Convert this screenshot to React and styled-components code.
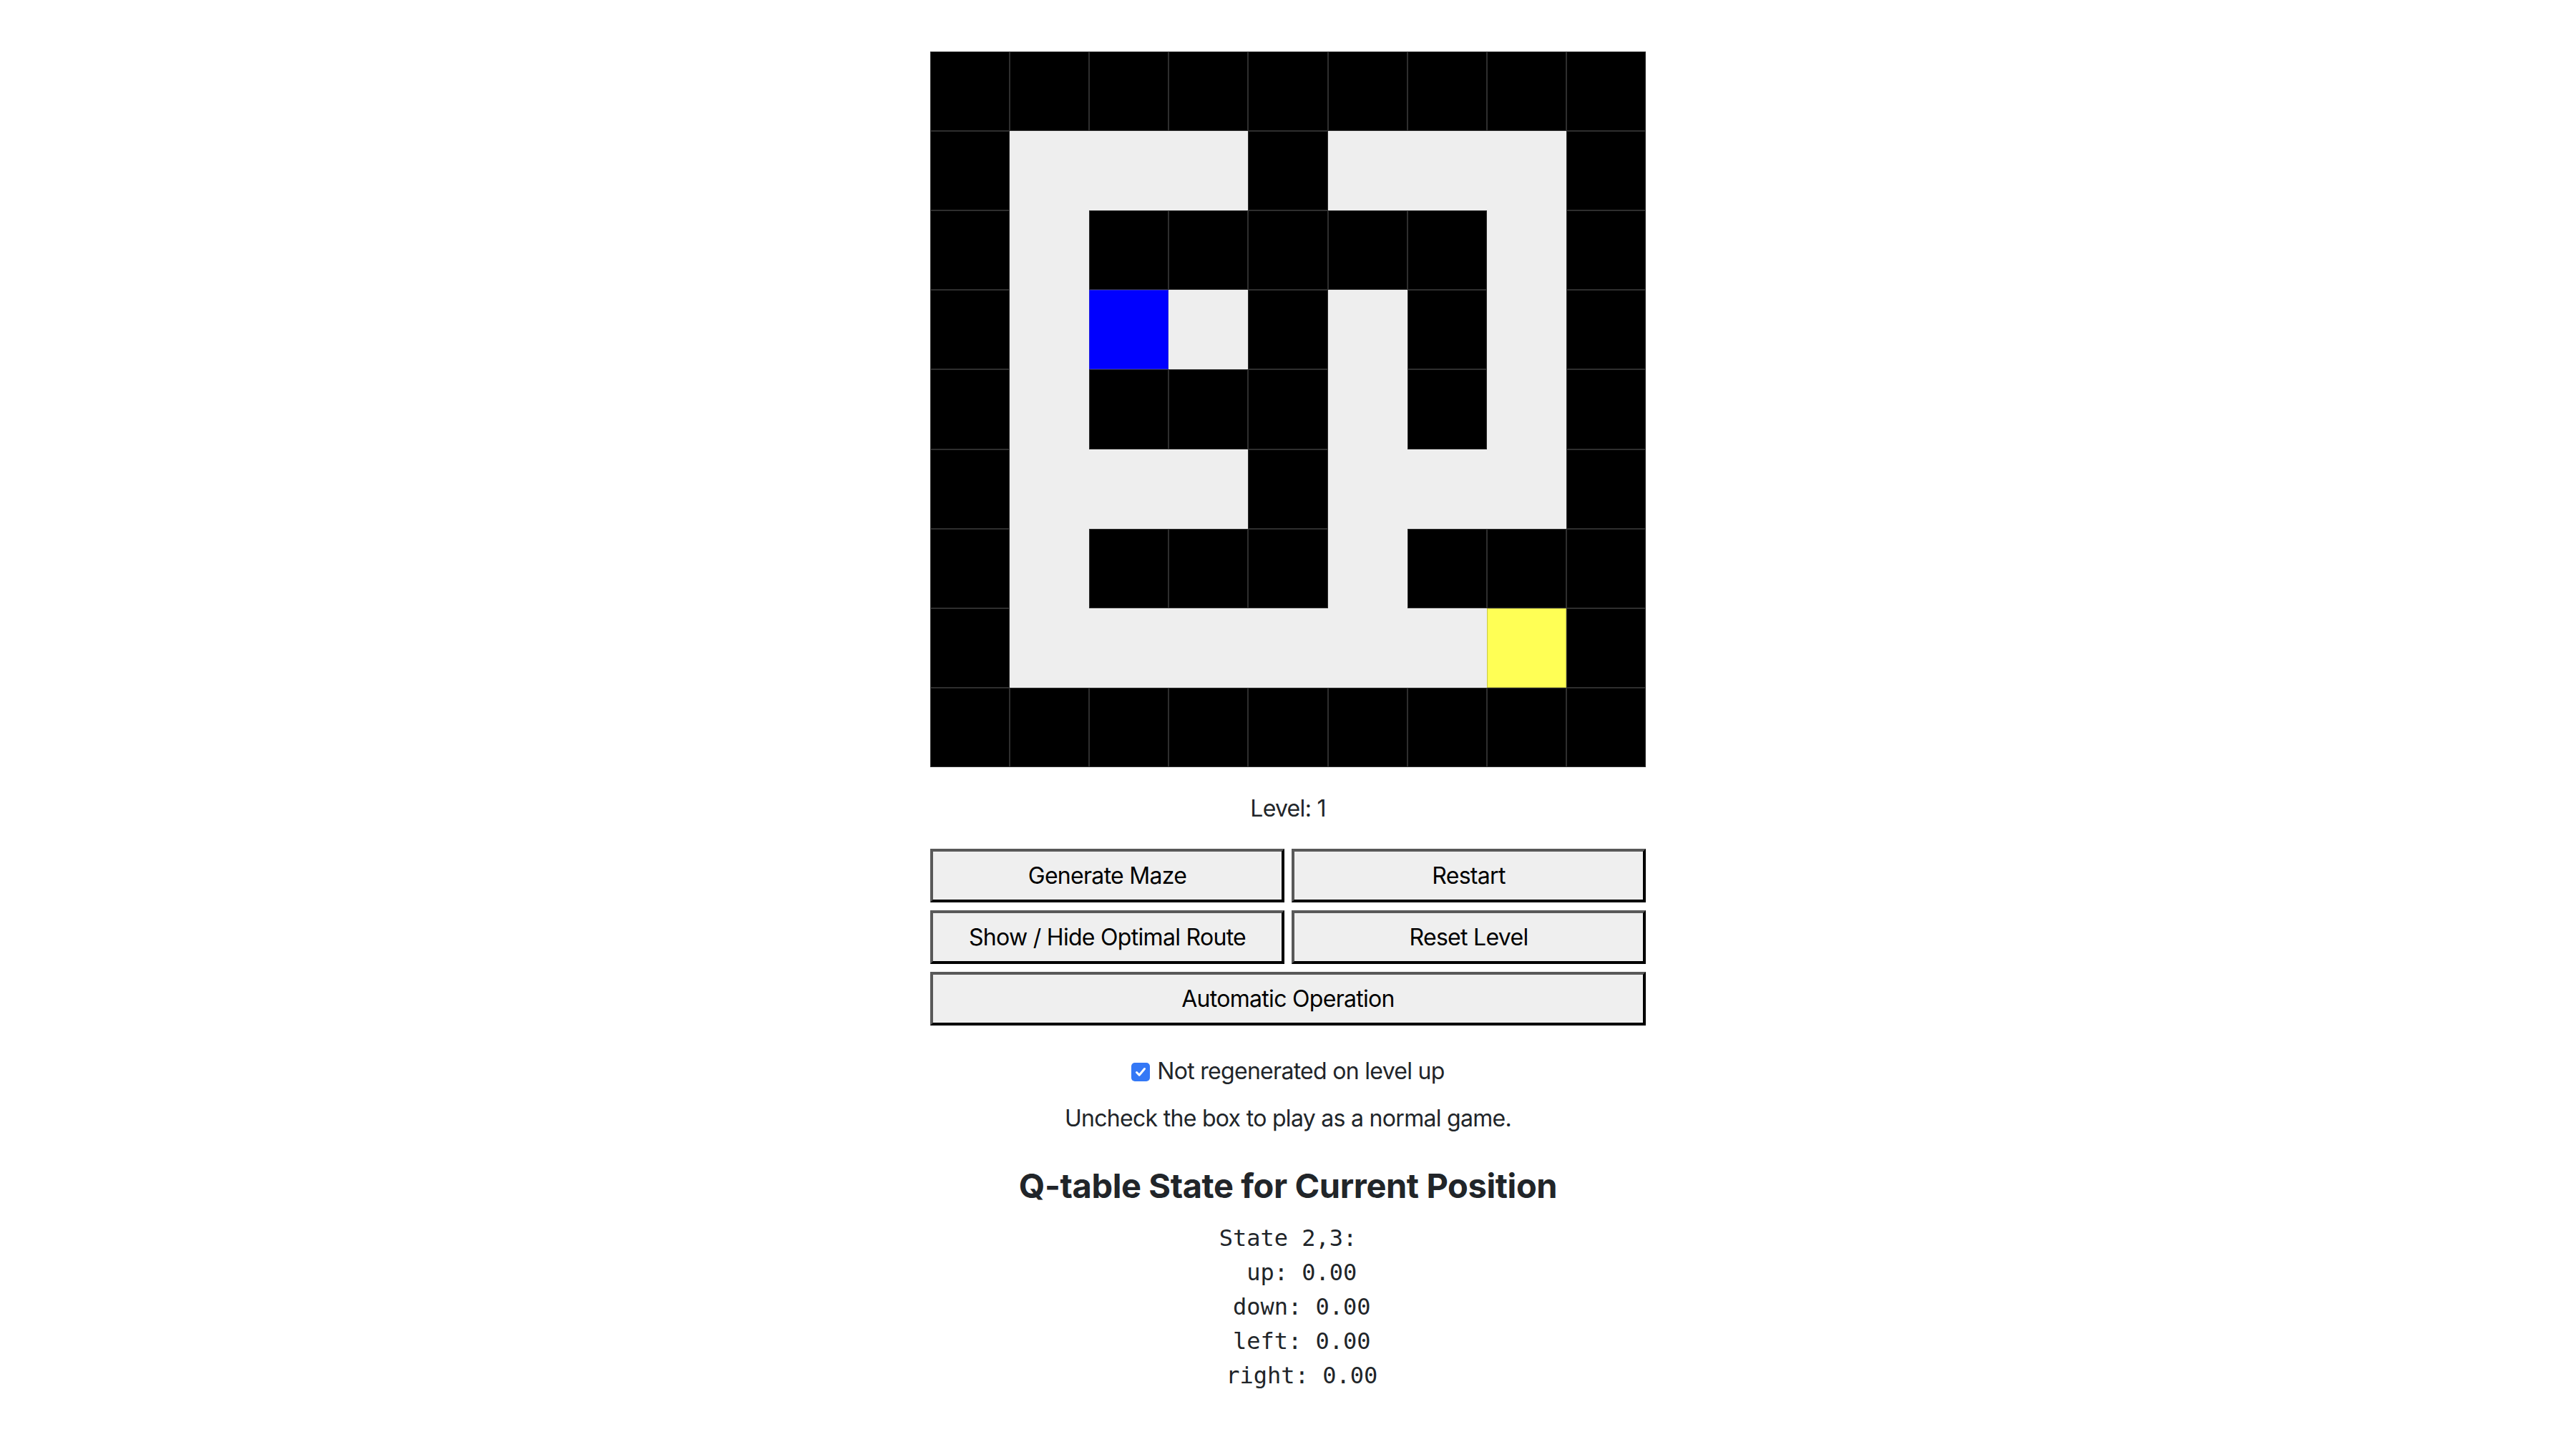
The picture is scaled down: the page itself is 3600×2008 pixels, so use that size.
import React from "react";
import styled, { createGlobalStyle } from "styled-components";

const GlobalStyle = createGlobalStyle`
  html, body {
    margin: 0;
    padding: 0;
    background: #ffffff;
  }
  body {
    font-family: Inter, "Noto Sans", "Liberation Sans", sans-serif;
    font-size: 32px;
    line-height: 1.5;
    letter-spacing: -0.7px;
    color: #212529;
  }
`;

const MAZE = [
  "#########",
  "#...#...#",
  "#.#####.#",
  "#.P.#.#.#",
  "#.###.#.#",
  "#...#...#",
  "#.###.###",
  "#......G#",
  "#########",
];

const Page = styled.main`
  display: flex;
  flex-direction: column;
  align-items: center;
  padding-top: 72px;
  text-align: center;
`;

const MazeGrid = styled.div`
  display: grid;
  grid-template-columns: repeat(9, 1fr);
  grid-template-rows: repeat(9, 1fr);
  width: 1000px;
  height: 1000px;
`;

const cellColors = {
  "#": { bg: "#000000", edge: "#2e2e2e" },
  ".": { bg: "#eeeeee", edge: "#eeeeee" },
  P: { bg: "#0000ff", edge: "#2222dd" },
  G: { bg: "#ffff55", edge: "#c9c944" },
};

const Cell = styled.div`
  background: ${(p) => cellColors[p.$kind].bg};
  box-shadow: inset 0 0 0 1px ${(p) => cellColors[p.$kind].edge};
`;

const LevelText = styled.div`
  margin-top: 34px;
  height: 48px;
`;

const ButtonGrid = styled.div`
  display: grid;
  grid-template-columns: 1fr 1fr;
  column-gap: 10px;
  row-gap: 11px;
  width: 1000px;
  margin-top: 32px;
`;

const ActionButton = styled.button`
  grid-column: ${(p) => (p.$wide ? "1 / span 2" : "auto")};
  height: 75px;
  padding: 0 12px;
  background: #efefef;
  color: #000000;
  font-family: Inter, "Noto Sans", "Liberation Sans", sans-serif;
  font-size: 32px;
  letter-spacing: -0.7px;
  line-height: 1;
  border-style: solid;
  border-width: 4px;
  border-color: #595959 #000000 #000000 #595959;
  cursor: pointer;
`;

const CheckRow = styled.label`
  display: flex;
  align-items: center;
  gap: 10px;
  margin-top: 40px;
  height: 48px;
`;

const CheckBox = styled.span`
  display: inline-flex;
  align-items: center;
  justify-content: center;
  width: 26px;
  height: 26px;
  border-radius: 5px;
  background: #3478f6;
  margin-top: 2px;
`;

const Note = styled.p`
  margin: 18px 0 0;
  height: 48px;
`;

const Heading = styled.h3`
  margin: 42px 0 0;
  font-size: 47px;
  font-weight: 700;
  line-height: 1.2;
  letter-spacing: -0.4px;
  color: #212529;
`;

const QState = styled.pre`
  margin: 21px 0 0;
  font-family: "DejaVu Sans Mono", "Liberation Mono", monospace;
  font-size: 32px;
  line-height: 48px;
  letter-spacing: 0;
  color: #212529;
  text-align: center;
`;

export default function App() {
  return (
    <>
      <GlobalStyle />
      <Page>
        <MazeGrid>
          {MAZE.flatMap((row, r) =>
            row.split("").map((c, col) => <Cell key={`${r}-${col}`} $kind={c} />)
          )}
        </MazeGrid>
        <LevelText>Level: 1</LevelText>
        <ButtonGrid>
          <ActionButton>Generate Maze</ActionButton>
          <ActionButton>Restart</ActionButton>
          <ActionButton>Show / Hide Optimal Route</ActionButton>
          <ActionButton>Reset Level</ActionButton>
          <ActionButton $wide>Automatic Operation</ActionButton>
        </ButtonGrid>
        <CheckRow>
          <CheckBox>
            <svg width="18" height="18" viewBox="0 0 18 18">
              <path
                d="M3.5 9.5 L7.2 13.2 L14.5 4.5"
                fill="none"
                stroke="#ffffff"
                strokeWidth="3"
                strokeLinecap="round"
                strokeLinejoin="round"
              />
            </svg>
          </CheckBox>
          <span>Not regenerated on level up</span>
        </CheckRow>
        <Note>Uncheck the box to play as a normal game.</Note>
        <Heading>Q-table State for Current Position</Heading>
        <QState>{`State 2,3:
  up: 0.00
  down: 0.00
  left: 0.00
  right: 0.00`}</QState>
      </Page>
    </>
  );
}
